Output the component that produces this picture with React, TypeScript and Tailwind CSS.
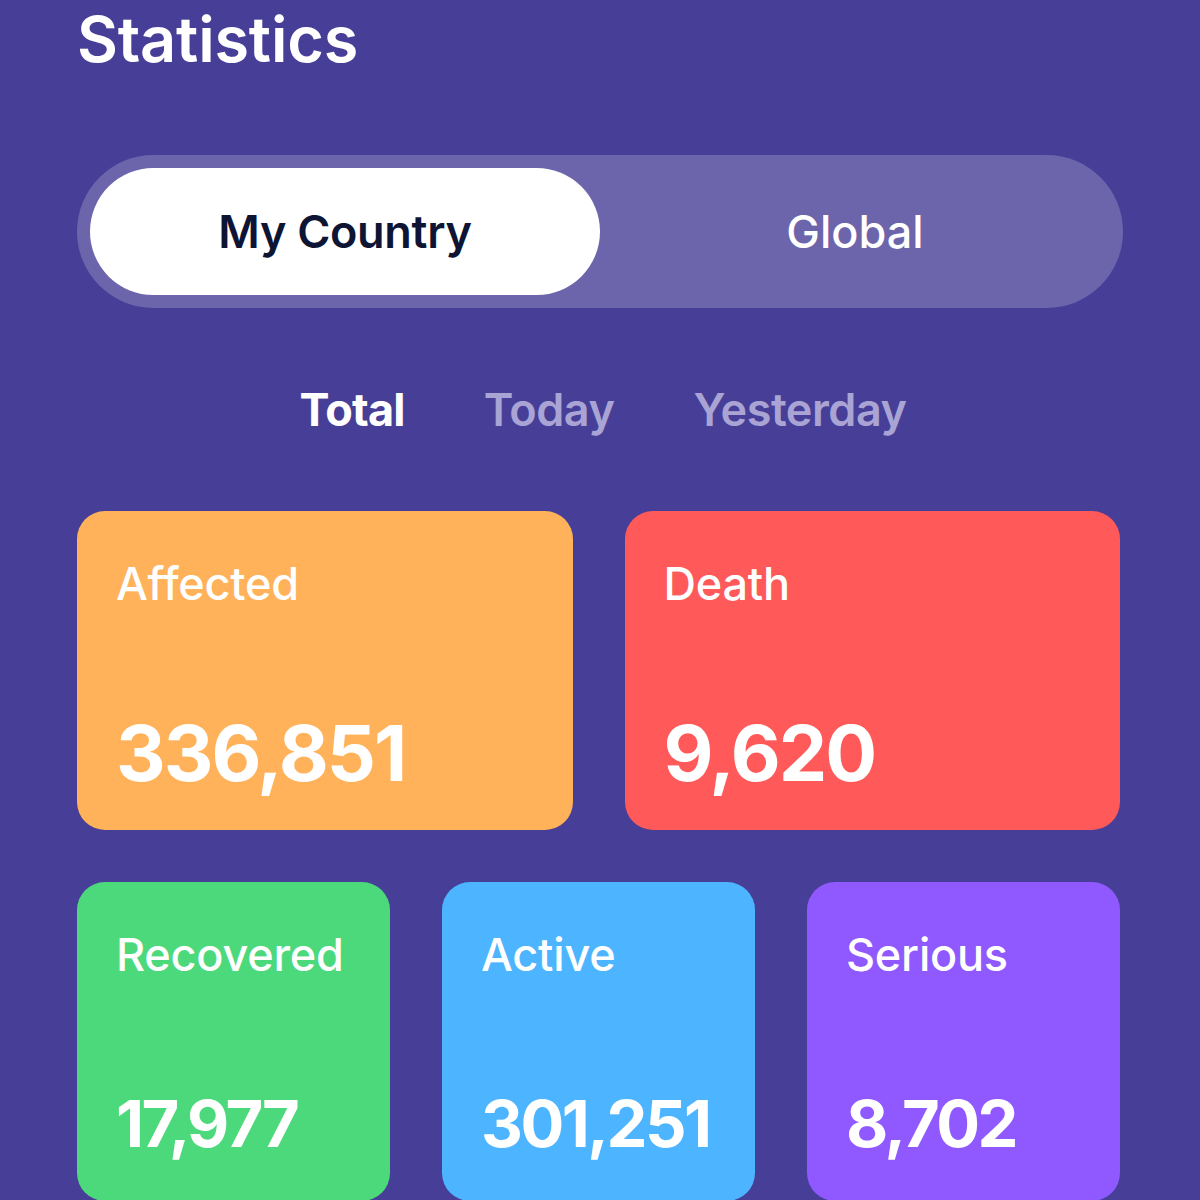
import React from "react";

const font = { fontFamily: "Inter, 'Noto Sans', sans-serif" };

function Card({ label, value, color, big }: { label: string; value: string; color: string; big?: boolean }) {
  return (
    <div className={`${color} rounded-[28px] h-[319px] flex flex-col pl-[39px] text-white`}>
      <div className="mt-[45px] text-[45px] leading-[56px] font-medium tracking-[-0.2px]">{label}</div>
      {big ? (
        <div className="mt-auto mb-[32px] text-[77px] leading-[90px] font-bold tracking-[-2px]">{value}</div>
      ) : (
        <div className="mt-auto mb-[37px] text-[65px] leading-[80px] font-bold tracking-[-2.5px]">{value}</div>
      )}
    </div>
  );
}

export default function App() {
  return (
    <div className="w-[1200px] h-[1200px] overflow-hidden bg-[#473F97]" style={font}>
      <div className="px-[77px]">
        <h1 className="pt-[8px] text-[63px] leading-[63px] font-semibold text-white tracking-[-0.2px]">Statistics</h1>
        <div className="mt-[84px] h-[153px] rounded-full bg-[#6D65AB] p-[13px] flex">
          <div className="flex-1 rounded-full bg-white flex items-center justify-center text-[45px] font-semibold text-[#0E1433] tracking-[-0.3px]">
            My Country
          </div>
          <div className="flex-1 flex items-center justify-center text-[45px] font-medium text-white tracking-[0px]">
            Global
          </div>
        </div>
        <div className="mt-[74px] pl-[6px] flex justify-center gap-[79px] text-[45px] leading-[56px] font-semibold tracking-[-0.5px]">
          <span className="text-white font-bold tracking-[-0.8px]">Total</span>
          <span className="text-[#A9A4D4]">Today</span>
          <span className="text-[#A9A4D4]">Yesterday</span>
        </div>
        <div className="w-[1043px] mt-[73px] grid grid-cols-2 gap-[52px]">
          <Card label="Affected" value="336,851" color="bg-[#FFB259]" big />
          <Card label="Death" value="9,620" color="bg-[#FF5959]" big />
        </div>
        <div className="w-[1043px] mt-[52px] grid grid-cols-3 gap-[52px]">
          <Card label="Recovered" value="17,977" color="bg-[#4CD97B]" />
          <Card label="Active" value="301,251" color="bg-[#4DB5FF]" />
          <Card label="Serious" value="8,702" color="bg-[#9059FF]" />
        </div>
      </div>
    </div>
  );
}
